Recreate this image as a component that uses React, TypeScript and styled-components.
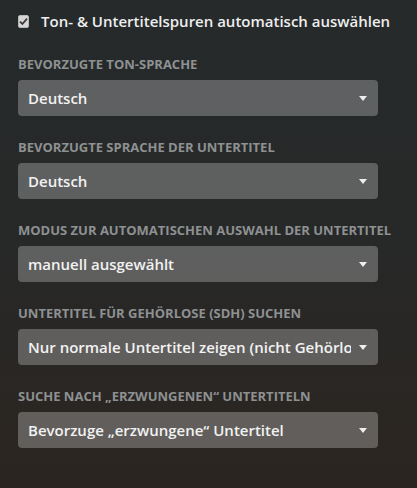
import styled, { createGlobalStyle } from "styled-components";

const GlobalStyle = createGlobalStyle`
  html, body {
    margin: 0;
    padding: 0;
    height: 100%;
  }
  body {
    font-family: "Open Sans", "Noto Sans", sans-serif;
    background: linear-gradient(180deg, #262a2b 0%, #272828 50%, #2b2520 100%);
    min-height: 488px;
  }
`;

interface Field {
  label: string;
  value: string;
}

const fields: Field[] = [
  { label: "Bevorzugte Ton-Sprache", value: "Deutsch" },
  { label: "Bevorzugte Sprache der Untertitel", value: "Deutsch" },
  { label: "Modus zur automatischen Auswahl der Untertitel", value: "manuell ausgewählt" },
  { label: "Untertitel für Gehörlose (SDH) suchen", value: "Nur normale Untertitel zeigen (nicht Gehörlose)" },
  { label: "Suche nach „erzwungenen“ Untertiteln", value: "Bevorzuge „erzwungene“ Untertitel" },
];

const App = () => {
  return (
    <>
      <GlobalStyle />
      <Panel>
        <CheckRow>
          <CheckBox>
            <svg width="9" height="9" viewBox="0 0 9 9">
              <path d="M1 4.6 L3.4 7 L8 1.6" fill="none" stroke="#3a3a3a" strokeWidth="1.8" />
            </svg>
          </CheckBox>
          <CheckLabel>Ton- &amp; Untertitelspuren automatisch auswählen</CheckLabel>
        </CheckRow>
        {fields.map((f) => (
          <Group key={f.label}>
            <Label>{f.label}</Label>
            <Select>
              <SelectText>{f.value}</SelectText>
              <Caret width="8" height="5" viewBox="0 0 8 5">
                <path d="M0 0 H8 L4 5 Z" fill="#eeeeee" />
              </Caret>
            </Select>
          </Group>
        ))}
      </Panel>
    </>
  );
};

const Panel = styled.div`
  padding: 11px 0 0 18px;
  width: 360px;
  display: flex;
  flex-direction: column;
`;

const CheckRow = styled.div`
  display: flex;
  align-items: center;
  height: 20px;
  margin-bottom: 25px;
`;

const CheckBox = styled.span`
  width: 11px;
  height: 11px;
  border: 1px solid #b8b8b8;
  border-radius: 2px;
  background: #d6d6d6;
  display: flex;
  align-items: center;
  justify-content: center;
  margin-right: 12px;
`;

const CheckLabel = styled.span`
  color: #eeeeee;
  font-size: 15px;
  font-weight: 600;
  white-space: nowrap;
`;

const Group = styled.div`
  display: flex;
  flex-direction: column;
  margin-bottom: 23px;
`;

const Label = styled.div`
  color: #8e9192;
  font-size: 13px;
  font-weight: 700;
  text-transform: uppercase;
  line-height: 16px;
  margin-bottom: 8px;
  white-space: nowrap;
`;

const Select = styled.div`
  height: 36px;
  border-radius: 4px;
  background: rgba(255, 255, 255, 0.26);
  display: flex;
  align-items: center;
  padding: 0 11px 0 10px;
  overflow: hidden;
`;

const SelectText = styled.span`
  flex: 1;
  min-width: 0;
  color: #f2f2f2;
  font-size: 15px;
  font-weight: 600;
  white-space: nowrap;
  overflow: hidden;
`;

const Caret = styled.svg`
  flex: none;
  margin-left: 8px;
  display: block;
`;

export default App;
